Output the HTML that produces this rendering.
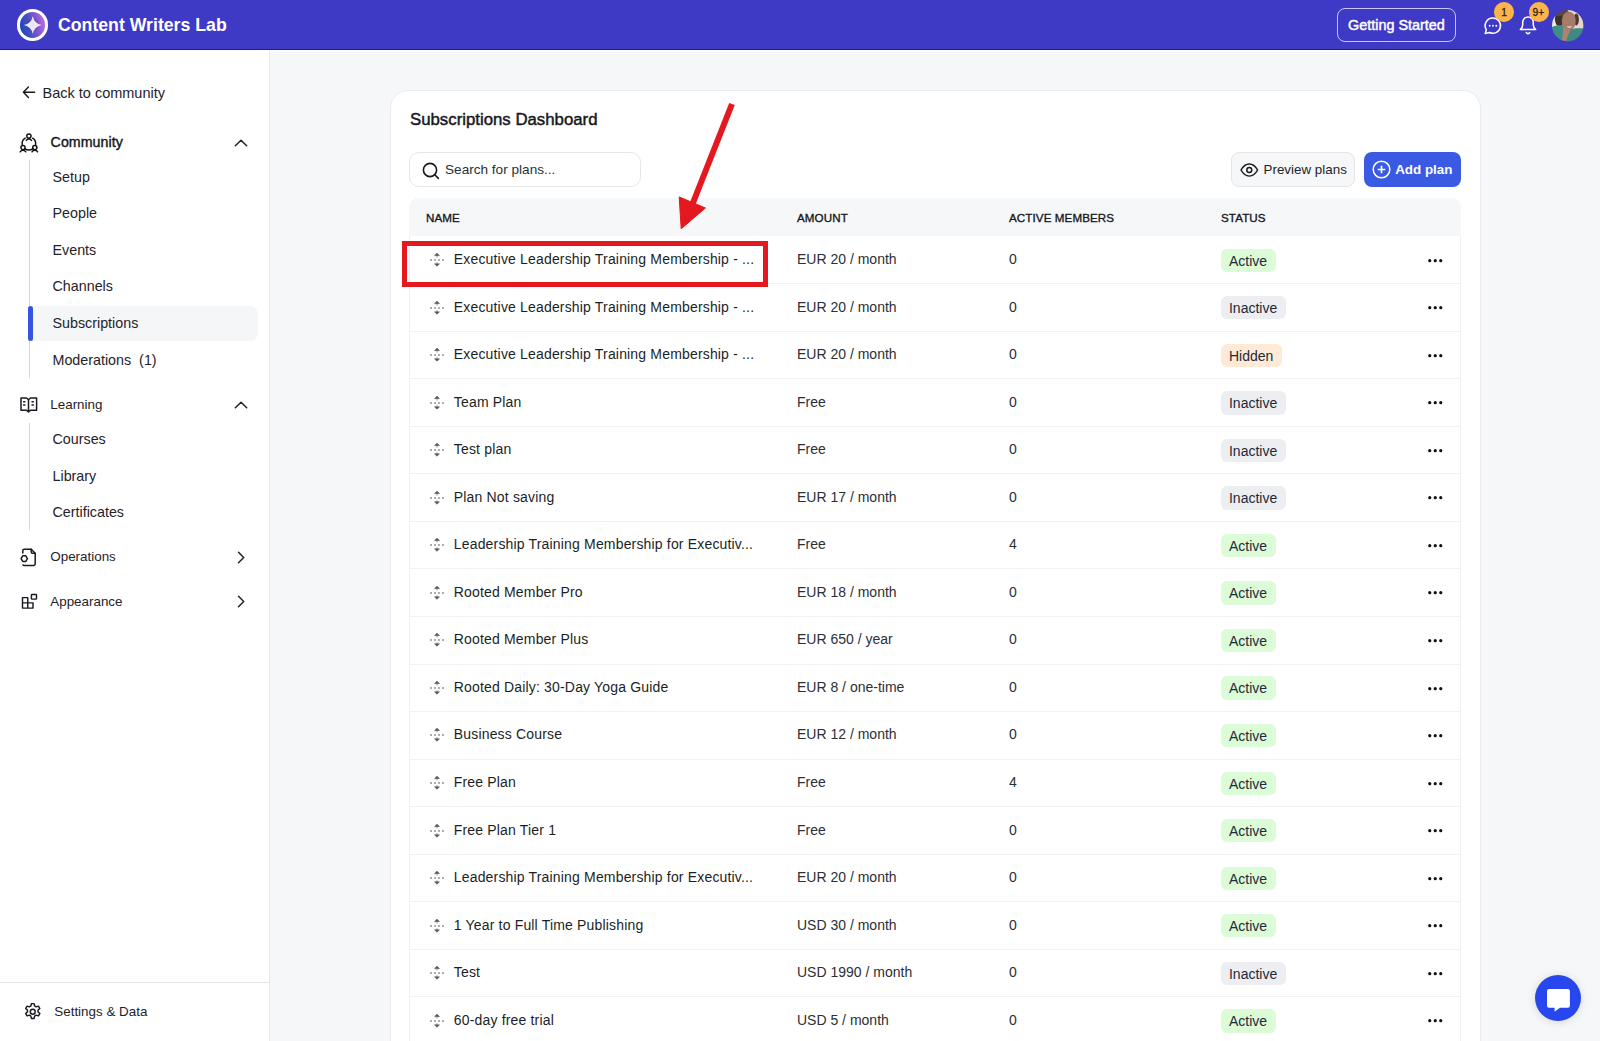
<!DOCTYPE html>
<html><head><meta charset="utf-8">
<style>
*{box-sizing:border-box;margin:0;padding:0}
html,body{width:1600px;height:1041px;overflow:hidden;background:#f6f7f9;font-family:"Liberation Sans",sans-serif;color:#1f2329}
.abs{position:absolute}
.t{position:absolute;white-space:nowrap;line-height:1}
svg{position:absolute;overflow:visible}
#hdr{position:absolute;left:0;top:0;width:1600px;height:50px;background:#3f3ac6;border-bottom:1px solid #1a0fd0}
#side{position:absolute;left:0;top:50px;width:270px;height:991px;background:#fff;border-right:1px solid #e7e8eb}
#card{position:absolute;left:390px;top:90.3px;width:1091px;height:1000px;background:#fff;border:1px solid #eaebee;border-radius:18px}
.bd{position:absolute;left:1220.6px;height:23.3px;padding:0 8.4px;border-radius:6px;font-size:14px;line-height:24px;color:#1f2937;white-space:nowrap}
.bd.active{background:#dcfbd7}
.bd.inactive{background:#eceef1}
.bd.hidden{background:#feead7}

</style></head><body>
<div id="hdr">
  <div class="abs" style="left:17.1px;top:9.3px;width:31.4px;height:31.4px;border-radius:50%;background:#fff;padding:3px">
    <div style="width:25.4px;height:25.4px;border-radius:50%;background:linear-gradient(78deg,#0c47b4 0%,#3f4fc0 32%,#8459d2 66%,#cb6dea 100%);position:relative;overflow:hidden">
      <svg width="25.4" height="25.4" viewBox="-12.7 -12.7 25.4 25.4" style="left:0;top:0"><defs><filter id="stb" x="-50%" y="-50%" width="200%" height="200%"><feGaussianBlur stdDeviation="1.3"/></filter></defs>
      <circle cx="0" cy="0" r="5.5" fill="#3a1c7a" opacity="0.45" filter="url(#stb)"/>
      <path d="M0 -8.9Q1.6 -1.6 8.9 0Q1.6 1.6 0 8.9Q-1.6 1.6 -8.9 0Q-1.6 -1.6 0 -8.9Z" fill="#ebe6fa" transform="translate(0.1,0.4)"/></svg>
    </div>
  </div>
  <div class="t" style="left:58px;top:17px;font-size:17.7px;font-weight:700;color:#fff">Content Writers Lab</div>
  <div class="abs" style="left:1337.2px;top:7.6px;width:119.2px;height:34.8px;border:1.3px solid rgba(255,255,255,0.7);border-radius:8px"></div>
  <div class="t" style="left:1348px;top:17.9px;font-size:14.4px;font-weight:400;color:#fff;-webkit-text-stroke:0.45px #fff">Getting Started</div>
  <!-- chat icon -->
  <svg width="18" height="18" viewBox="0 0 18 18" style="left:1483.5px;top:16.5px"><path d="M9 1.1a7.6 7.6 0 1 1-3.5 14.4L1.2 16.6l1.1-3.9A7.6 7.6 0 0 1 9 1.1Z" fill="none" stroke="#fff" stroke-width="1.5" stroke-linejoin="round"/><circle cx="5.7" cy="8.8" r="0.95" fill="#fff"/><circle cx="9" cy="8.8" r="0.95" fill="#fff"/><circle cx="12.3" cy="8.8" r="0.95" fill="#fff"/></svg>
  <div class="abs" style="left:1494.3px;top:2.3px;width:19.7px;height:19.7px;border-radius:50%;background:#fdb44b"></div>
  <div class="t" style="left:1501.3px;top:8px;font-size:10.2px;font-weight:400;color:#2a2420;-webkit-text-stroke:0.3px #2a2420">1</div>
  <!-- bell -->
  <svg width="18" height="20" viewBox="0 0 18 20" style="left:1518.5px;top:15px"><path d="M3.7 7.2A5.3 5.3 0 0 1 14.3 7.2V10c0 2 1.1 3.4 2.4 4.6H1.3C2.6 13.4 3.7 12 3.7 10Z" fill="none" stroke="#fff" stroke-width="1.5" stroke-linejoin="round"/><path d="M7.2 17.6 9 18.8 10.8 17.6" fill="none" stroke="#fff" stroke-width="1.4" stroke-linecap="round" stroke-linejoin="round"/></svg>
  <div class="abs" style="left:1529px;top:2.3px;width:19.7px;height:19.7px;border-radius:50%;background:#fdb44b"></div>
  <div class="t" style="left:1532.6px;top:8px;font-size:10.2px;font-weight:400;color:#2a2420;-webkit-text-stroke:0.3px #2a2420">9+</div>
  <!-- avatar -->
  <svg width="31.4" height="31.4" viewBox="0 0 31.4 31.4" style="left:1551.8px;top:9.6px"><defs><clipPath id="avc"><circle cx="15.7" cy="15.7" r="15.7"/></clipPath><filter id="avb" x="-10%" y="-10%" width="120%" height="120%"><feGaussianBlur stdDeviation="0.7"/></filter></defs>
  <g clip-path="url(#avc)"><g filter="url(#avb)">
   <rect x="-2" y="-2" width="36" height="36" fill="#e6d6ca"/>
   <rect x="0" y="0" width="6" height="32" fill="#eee8e2"/>
   <ellipse cx="7.5" cy="9" rx="4.6" ry="7.5" fill="#3d3029"/>
   <ellipse cx="24.3" cy="9.5" rx="2.6" ry="6" fill="#4a3a32"/>
   <ellipse cx="7.5" cy="2" rx="9" ry="4" fill="#5a463c"/><ellipse cx="16.8" cy="11" rx="7" ry="9.6" fill="#a77a6c"/>
   <path d="M9.5 17 L19 19 L15 32 H8Z" fill="#b08070"/>
   <path d="M0 17 C3 15.5 7 15 11.5 15.5 L10 32 H0Z" fill="#3f8e86"/>
   <path d="M18.5 19.5 C22 18.5 26 18 31.4 18.5 V32 H13.5Z" fill="#3c8a84"/>
   <path d="M15.5 16.5 C16.5 17.2 18.5 17.2 19.5 16.5" stroke="#f4eeee" stroke-width="1.2" fill="none"/>
  </g></g></svg>
</div>

<div id="side"></div>
<svg width="14" height="13" viewBox="0 0 14 13" style="left:22px;top:86px"><path d="M12.6 6.3H1.4M6.4 1 1.4 6.3l5 5.3" fill="none" stroke="#15171b" stroke-width="1.4" stroke-linecap="round" stroke-linejoin="round"/></svg>
<div class="t" style="left:42.5px;top:86.12px;font-size:14.5px;font-weight:400;color:#1f2329;">Back to community</div>
<svg width="20" height="20" viewBox="0 0 20 20" style="left:19px;top:132.5px"><g fill="none" stroke="#111" stroke-width="1.45" stroke-linecap="round">
<circle cx="9.9" cy="3.1" r="2.1"/><path d="M7.3 7.4c.6-1 1.5-1.4 2.6-1.4s2 .4 2.6 1.4"/>
<circle cx="4" cy="14.5" r="2.1"/><path d="M1.2 18.8c.6-1 1.6-1.5 2.8-1.5s2.2.5 2.8 1.5"/>
<circle cx="15.8" cy="14.5" r="2.1"/><path d="M13 18.8c.6-1 1.6-1.5 2.8-1.5s2.2.5 2.8 1.5"/>
<path d="M6.3 5.2A6.3 6.3 0 0 0 3.2 11.6M13.6 5.2A6.3 6.3 0 0 1 16.6 11.6M6.2 15.8c1.1 .8 2.3 1.1 3.7 1.1s2.6-.3 3.7-1.1"/></g></svg>
<div class="t" style="left:50.6px;top:134.98px;font-size:14.2px;font-weight:400;color:#15181d;-webkit-text-stroke:0.4px #15181d;letter-spacing:0.05px">Community</div>
<svg width="14" height="8" viewBox="0 0 14 8" style="left:233.5px;top:138.5px"><path d="M1.3 6.8 7 1.2l5.7 5.6" fill="none" stroke="#1f2329" stroke-width="1.5" stroke-linecap="round" stroke-linejoin="round"/></svg>
<div class="abs" style="left:29px;top:160px;width:1.3px;height:218px;background:#d4d6db"></div>
<div class="abs" style="left:28.5px;top:306px;width:229px;height:35px;background:#f5f6f8;border-radius:0 8px 8px 0"></div>
<div class="abs" style="left:28.2px;top:306.3px;width:4.5px;height:34.5px;background:#3355e0;border-radius:3px"></div>
<div class="t" style="left:52.5px;top:169.69px;font-size:14.3px;font-weight:400;color:#1f2329;">Setup</div>
<div class="t" style="left:52.5px;top:206.29px;font-size:14.3px;font-weight:400;color:#1f2329;">People</div>
<div class="t" style="left:52.5px;top:242.89px;font-size:14.3px;font-weight:400;color:#1f2329;">Events</div>
<div class="t" style="left:52.5px;top:279.49px;font-size:14.3px;font-weight:400;color:#1f2329;">Channels</div>
<div class="t" style="left:52.5px;top:316.09px;font-size:14.3px;font-weight:400;color:#1f2329;">Subscriptions</div>
<div class="t" style="left:52.5px;top:352.69px;font-size:14.3px;font-weight:400;color:#1f2329;">Moderations&nbsp;&nbsp;(1)</div>
<svg width="18" height="16" viewBox="0 0 18 16" style="left:20px;top:397px"><g fill="none" stroke="#1a1a22" stroke-width="1.5" stroke-linejoin="round" stroke-linecap="round">
<path d="M1 1h5.5L8.5 2.7 10.5 1H16.6v12.2h-6L8.5 14.8 6.4 13.2H1Z"/><path d="M8.5 2.7v12"/>
<path d="M3.6 4.7h1.3M3.6 7.9h1.3M12 4.7h1.3M12 7.9h1.3"/></g></svg>
<div class="t" style="left:50.3px;top:398.16px;font-size:13.4px;font-weight:400;color:#1f2329;">Learning</div>
<svg width="14" height="8" viewBox="0 0 14 8" style="left:233.5px;top:400.8px"><path d="M1.3 6.8 7 1.2l5.7 5.6" fill="none" stroke="#1f2329" stroke-width="1.5" stroke-linecap="round" stroke-linejoin="round"/></svg>
<div class="abs" style="left:29px;top:422.5px;width:1.3px;height:107.5px;background:#d4d6db"></div>
<div class="t" style="left:52.5px;top:431.79px;font-size:14.3px;font-weight:400;color:#1f2329;">Courses</div>
<div class="t" style="left:52.5px;top:468.59px;font-size:14.3px;font-weight:400;color:#1f2329;">Library</div>
<div class="t" style="left:52.5px;top:505.09px;font-size:14.3px;font-weight:400;color:#1f2329;">Certificates</div>
<svg width="16" height="19" viewBox="0 0 16 19" style="left:19.5px;top:547.5px"><g fill="none" stroke="#1a1a22" stroke-width="1.5" stroke-linejoin="round" stroke-linecap="round">
<path d="M2.8 5V2.6A1.4 1.4 0 0 1 4.2 1.2H11.2L15.2 5.2V16.1A1.4 1.4 0 0 1 13.8 17.5H4.1A1.3 1.3 0 0 1 3 16.9"/><path d="M11.2 1.3v2.6a1.3 1.3 0 0 0 1.3 1.3h2.6"/>
<path d="M7.4 10.6 5.8 13.4H2.7L1.1 10.6 2.7 7.8H5.8Z"/></g></svg>
<div class="t" style="left:50.3px;top:550.26px;font-size:13.4px;font-weight:400;color:#1f2329;">Operations</div>
<svg width="8" height="14" viewBox="0 0 8 14" style="left:236.5px;top:551px"><path d="M1.5 1.3l5.2 5.2-5.2 5.2" fill="none" stroke="#1f2329" stroke-width="1.5" stroke-linecap="round" stroke-linejoin="round"/></svg>
<svg width="17" height="17" viewBox="0 0 17 17" style="left:20.5px;top:593px"><g fill="none" stroke="#1a1a22" stroke-width="1.45" stroke-linejoin="round">
<path d="M1.5 4.6H6.75V9.85H12V15.1H1.5Z"/><path d="M1.5 9.85H6.75V15.1"/><rect x="10.4" y="1.5" width="5.1" height="4.6" rx=".7"/></g></svg>
<div class="t" style="left:50.3px;top:594.56px;font-size:13.4px;font-weight:400;color:#1f2329;">Appearance</div>
<svg width="8" height="14" viewBox="0 0 8 14" style="left:236.5px;top:595px"><path d="M1.5 1.3l5.2 5.2-5.2 5.2" fill="none" stroke="#1f2329" stroke-width="1.5" stroke-linecap="round" stroke-linejoin="round"/></svg>
<div class="abs" style="left:0;top:982px;width:269px;height:1px;background:#e5e7eb"></div>
<svg width="19.5" height="19.5" viewBox="0 0 24 24" style="left:22.8px;top:1002px"><g fill="none" stroke="#1a1a22" stroke-width="1.8" stroke-linejoin="round">
<path d="M10.3 2h3.4l.6 2.9 1.9 1.1 2.8-.9 1.7 2.9-2.2 2v2.2l2.2 2-1.7 2.9-2.8-.9-1.9 1.1-.6 2.9h-3.4l-.6-2.9-1.9-1.1-2.8.9-1.7-2.9 2.2-2v-2.2l-2.2-2 1.7-2.9 2.8.9 1.9-1.1Z"/><circle cx="12" cy="12" r="3"/></g></svg>
<div class="t" style="left:54.3px;top:1004.66px;font-size:13.4px;font-weight:400;color:#1f2329;">Settings &amp; Data</div>
<div class="abs" style="left:270px;top:50px;width:1330px;height:1px;background:#fff"></div>
<div id="card"></div>
<div class="t" style="left:410px;top:111.88px;font-size:16.8px;font-weight:400;color:#15181d;-webkit-text-stroke:0.45px #15181d">Subscriptions Dashboard</div>
<div class="abs" style="left:409.4px;top:152.2px;width:231.6px;height:34.4px;border:1px solid #e5e7eb;border-radius:10px;background:#fff"></div>
<svg width="18" height="18" viewBox="0 0 18 18" style="left:421.5px;top:162px"><circle cx="8" cy="8" r="6.6" fill="none" stroke="#15181d" stroke-width="1.6"/><path d="M12.8 12.8 16.4 16.4" stroke="#15181d" stroke-width="1.6" stroke-linecap="round"/></svg>
<div class="t" style="left:445px;top:162.79px;font-size:13.6px;font-weight:400;color:#2b2f36;">Search for plans...</div>
<div class="abs" style="left:1231.4px;top:152.1px;width:124.1px;height:34.6px;border:1px solid #e3e5e8;border-radius:8px;background:#f6f7f9"></div>
<svg width="19" height="14" viewBox="0 0 19 14" style="left:1240.3px;top:162.8px"><path d="M1 7C3.2 3 6 .9 9.3.9s6.1 2.1 8.3 6.1C15.4 11 12.6 13.1 9.3 13.1S3.2 11 1 7Z" fill="none" stroke="#15181d" stroke-width="1.45" stroke-linejoin="round"/><circle cx="9.3" cy="7" r="2.45" fill="none" stroke="#15181d" stroke-width="1.45"/></svg>
<div class="t" style="left:1263.5px;top:162.96px;font-size:13.4px;font-weight:400;color:#1f2329;">Preview plans</div>
<div class="abs" style="left:1363.5px;top:152.3px;width:97.3px;height:34.5px;border-radius:8px;background:#3a5ae3"></div>
<svg width="19" height="19" viewBox="0 0 19 19" style="left:1371.8px;top:160.3px"><circle cx="9.5" cy="9.5" r="8.3" fill="none" stroke="#fff" stroke-width="1.5"/><path d="M9.5 5.7v7.6M5.7 9.5h7.6" stroke="#fff" stroke-width="1.7" stroke-linecap="butt"/></svg>
<div class="t" style="left:1395.2px;top:162.66px;font-size:13.4px;font-weight:700;color:#fff;">Add plan</div>
<div class="abs" style="left:409px;top:198px;width:1052px;height:900px;border:1px solid #eef0f2;border-radius:10px;background:#fff"></div>
<div class="abs" style="left:409px;top:198px;width:1052px;height:38.4px;border-radius:10px 10px 0 0;background:#f6f7f9"></div>
<div class="t" style="left:426px;top:211.58px;font-size:11.6px;font-weight:400;color:#15181d;-webkit-text-stroke:0.35px #15181d;letter-spacing:0.1px">NAME</div>
<div class="t" style="left:797px;top:211.58px;font-size:11.6px;font-weight:400;color:#15181d;-webkit-text-stroke:0.35px #15181d;letter-spacing:0.1px">AMOUNT</div>
<div class="t" style="left:1009px;top:211.58px;font-size:11.6px;font-weight:400;color:#15181d;-webkit-text-stroke:0.35px #15181d;letter-spacing:0.1px">ACTIVE MEMBERS</div>
<div class="t" style="left:1221px;top:211.58px;font-size:11.6px;font-weight:400;color:#15181d;-webkit-text-stroke:0.35px #15181d;letter-spacing:0.1px">STATUS</div>
<svg width="16" height="16" viewBox="-8 -8 16 16" style="left:429.15px;top:252.06px"><g stroke-linecap="round"><path d="M-6.3 0h.7M-2.3 0h.7M1.6 0h.7M5.6 0h.7" stroke="#767b86" stroke-width="1.3"/><path d="M0 -2.9v-1.8M0 2.4v1.6" stroke="#a4a9b1" stroke-width="1.2"/><path d="M-2.1 -4.7 0 -6.8 2.1 -4.7Z M-2.1 4.1 0 6.2 2.1 4.1Z" fill="#555a66" stroke="#555a66" stroke-width="0.8" stroke-linejoin="round"/></g></svg>
<div class="t" style="left:453.8px;top:252.05px;font-size:14px;font-weight:400;color:#1b1f24;letter-spacing:0.17px">Executive Leadership Training Membership - ...</div>
<div class="t" style="left:797px;top:252.05px;font-size:14px;font-weight:400;color:#2b2f36;">EUR 20 / month</div>
<div class="t" style="left:1009px;top:252.05px;font-size:14px;font-weight:400;color:#2b2f36;">0</div>
<div class="bd active" style="top:248.60px">Active</div>
<svg width="16" height="4" viewBox="0 0 16 4" style="left:1427.6px;top:258.70px"><circle cx="1.75" cy="1.7" r="1.6" fill="#111"/><circle cx="7.25" cy="1.7" r="1.6" fill="#111"/><circle cx="12.75" cy="1.7" r="1.6" fill="#111"/></svg>
<div class="abs" style="left:410px;top:283.24px;width:1050px;height:1px;background:#f1f2f4"></div>
<svg width="16" height="16" viewBox="-8 -8 16 16" style="left:429.15px;top:299.60px"><g stroke-linecap="round"><path d="M-6.3 0h.7M-2.3 0h.7M1.6 0h.7M5.6 0h.7" stroke="#767b86" stroke-width="1.3"/><path d="M0 -2.9v-1.8M0 2.4v1.6" stroke="#a4a9b1" stroke-width="1.2"/><path d="M-2.1 -4.7 0 -6.8 2.1 -4.7Z M-2.1 4.1 0 6.2 2.1 4.1Z" fill="#555a66" stroke="#555a66" stroke-width="0.8" stroke-linejoin="round"/></g></svg>
<div class="t" style="left:453.8px;top:299.59px;font-size:14px;font-weight:400;color:#1b1f24;letter-spacing:0.17px">Executive Leadership Training Membership - ...</div>
<div class="t" style="left:797px;top:299.59px;font-size:14px;font-weight:400;color:#2b2f36;">EUR 20 / month</div>
<div class="t" style="left:1009px;top:299.59px;font-size:14px;font-weight:400;color:#2b2f36;">0</div>
<div class="bd inactive" style="top:296.14px">Inactive</div>
<svg width="16" height="4" viewBox="0 0 16 4" style="left:1427.6px;top:306.24px"><circle cx="1.75" cy="1.7" r="1.6" fill="#111"/><circle cx="7.25" cy="1.7" r="1.6" fill="#111"/><circle cx="12.75" cy="1.7" r="1.6" fill="#111"/></svg>
<div class="abs" style="left:410px;top:330.78px;width:1050px;height:1px;background:#f1f2f4"></div>
<svg width="16" height="16" viewBox="-8 -8 16 16" style="left:429.15px;top:347.14px"><g stroke-linecap="round"><path d="M-6.3 0h.7M-2.3 0h.7M1.6 0h.7M5.6 0h.7" stroke="#767b86" stroke-width="1.3"/><path d="M0 -2.9v-1.8M0 2.4v1.6" stroke="#a4a9b1" stroke-width="1.2"/><path d="M-2.1 -4.7 0 -6.8 2.1 -4.7Z M-2.1 4.1 0 6.2 2.1 4.1Z" fill="#555a66" stroke="#555a66" stroke-width="0.8" stroke-linejoin="round"/></g></svg>
<div class="t" style="left:453.8px;top:347.13px;font-size:14px;font-weight:400;color:#1b1f24;letter-spacing:0.17px">Executive Leadership Training Membership - ...</div>
<div class="t" style="left:797px;top:347.13px;font-size:14px;font-weight:400;color:#2b2f36;">EUR 20 / month</div>
<div class="t" style="left:1009px;top:347.13px;font-size:14px;font-weight:400;color:#2b2f36;">0</div>
<div class="bd hidden" style="top:343.68px">Hidden</div>
<svg width="16" height="4" viewBox="0 0 16 4" style="left:1427.6px;top:353.78px"><circle cx="1.75" cy="1.7" r="1.6" fill="#111"/><circle cx="7.25" cy="1.7" r="1.6" fill="#111"/><circle cx="12.75" cy="1.7" r="1.6" fill="#111"/></svg>
<div class="abs" style="left:410px;top:378.32px;width:1050px;height:1px;background:#f1f2f4"></div>
<svg width="16" height="16" viewBox="-8 -8 16 16" style="left:429.15px;top:394.68px"><g stroke-linecap="round"><path d="M-6.3 0h.7M-2.3 0h.7M1.6 0h.7M5.6 0h.7" stroke="#767b86" stroke-width="1.3"/><path d="M0 -2.9v-1.8M0 2.4v1.6" stroke="#a4a9b1" stroke-width="1.2"/><path d="M-2.1 -4.7 0 -6.8 2.1 -4.7Z M-2.1 4.1 0 6.2 2.1 4.1Z" fill="#555a66" stroke="#555a66" stroke-width="0.8" stroke-linejoin="round"/></g></svg>
<div class="t" style="left:453.8px;top:394.67px;font-size:14px;font-weight:400;color:#1b1f24;letter-spacing:0.17px">Team Plan</div>
<div class="t" style="left:797px;top:394.67px;font-size:14px;font-weight:400;color:#2b2f36;">Free</div>
<div class="t" style="left:1009px;top:394.67px;font-size:14px;font-weight:400;color:#2b2f36;">0</div>
<div class="bd inactive" style="top:391.22px">Inactive</div>
<svg width="16" height="4" viewBox="0 0 16 4" style="left:1427.6px;top:401.32px"><circle cx="1.75" cy="1.7" r="1.6" fill="#111"/><circle cx="7.25" cy="1.7" r="1.6" fill="#111"/><circle cx="12.75" cy="1.7" r="1.6" fill="#111"/></svg>
<div class="abs" style="left:410px;top:425.86px;width:1050px;height:1px;background:#f1f2f4"></div>
<svg width="16" height="16" viewBox="-8 -8 16 16" style="left:429.15px;top:442.22px"><g stroke-linecap="round"><path d="M-6.3 0h.7M-2.3 0h.7M1.6 0h.7M5.6 0h.7" stroke="#767b86" stroke-width="1.3"/><path d="M0 -2.9v-1.8M0 2.4v1.6" stroke="#a4a9b1" stroke-width="1.2"/><path d="M-2.1 -4.7 0 -6.8 2.1 -4.7Z M-2.1 4.1 0 6.2 2.1 4.1Z" fill="#555a66" stroke="#555a66" stroke-width="0.8" stroke-linejoin="round"/></g></svg>
<div class="t" style="left:453.8px;top:442.21px;font-size:14px;font-weight:400;color:#1b1f24;letter-spacing:0.17px">Test plan</div>
<div class="t" style="left:797px;top:442.21px;font-size:14px;font-weight:400;color:#2b2f36;">Free</div>
<div class="t" style="left:1009px;top:442.21px;font-size:14px;font-weight:400;color:#2b2f36;">0</div>
<div class="bd inactive" style="top:438.76px">Inactive</div>
<svg width="16" height="4" viewBox="0 0 16 4" style="left:1427.6px;top:448.86px"><circle cx="1.75" cy="1.7" r="1.6" fill="#111"/><circle cx="7.25" cy="1.7" r="1.6" fill="#111"/><circle cx="12.75" cy="1.7" r="1.6" fill="#111"/></svg>
<div class="abs" style="left:410px;top:473.40px;width:1050px;height:1px;background:#f1f2f4"></div>
<svg width="16" height="16" viewBox="-8 -8 16 16" style="left:429.15px;top:489.76px"><g stroke-linecap="round"><path d="M-6.3 0h.7M-2.3 0h.7M1.6 0h.7M5.6 0h.7" stroke="#767b86" stroke-width="1.3"/><path d="M0 -2.9v-1.8M0 2.4v1.6" stroke="#a4a9b1" stroke-width="1.2"/><path d="M-2.1 -4.7 0 -6.8 2.1 -4.7Z M-2.1 4.1 0 6.2 2.1 4.1Z" fill="#555a66" stroke="#555a66" stroke-width="0.8" stroke-linejoin="round"/></g></svg>
<div class="t" style="left:453.8px;top:489.75px;font-size:14px;font-weight:400;color:#1b1f24;letter-spacing:0.17px">Plan Not saving</div>
<div class="t" style="left:797px;top:489.75px;font-size:14px;font-weight:400;color:#2b2f36;">EUR 17 / month</div>
<div class="t" style="left:1009px;top:489.75px;font-size:14px;font-weight:400;color:#2b2f36;">0</div>
<div class="bd inactive" style="top:486.30px">Inactive</div>
<svg width="16" height="4" viewBox="0 0 16 4" style="left:1427.6px;top:496.40px"><circle cx="1.75" cy="1.7" r="1.6" fill="#111"/><circle cx="7.25" cy="1.7" r="1.6" fill="#111"/><circle cx="12.75" cy="1.7" r="1.6" fill="#111"/></svg>
<div class="abs" style="left:410px;top:520.94px;width:1050px;height:1px;background:#f1f2f4"></div>
<svg width="16" height="16" viewBox="-8 -8 16 16" style="left:429.15px;top:537.30px"><g stroke-linecap="round"><path d="M-6.3 0h.7M-2.3 0h.7M1.6 0h.7M5.6 0h.7" stroke="#767b86" stroke-width="1.3"/><path d="M0 -2.9v-1.8M0 2.4v1.6" stroke="#a4a9b1" stroke-width="1.2"/><path d="M-2.1 -4.7 0 -6.8 2.1 -4.7Z M-2.1 4.1 0 6.2 2.1 4.1Z" fill="#555a66" stroke="#555a66" stroke-width="0.8" stroke-linejoin="round"/></g></svg>
<div class="t" style="left:453.8px;top:537.29px;font-size:14px;font-weight:400;color:#1b1f24;letter-spacing:0.17px">Leadership Training Membership for Executiv...</div>
<div class="t" style="left:797px;top:537.29px;font-size:14px;font-weight:400;color:#2b2f36;">Free</div>
<div class="t" style="left:1009px;top:537.29px;font-size:14px;font-weight:400;color:#2b2f36;">4</div>
<div class="bd active" style="top:533.84px">Active</div>
<svg width="16" height="4" viewBox="0 0 16 4" style="left:1427.6px;top:543.94px"><circle cx="1.75" cy="1.7" r="1.6" fill="#111"/><circle cx="7.25" cy="1.7" r="1.6" fill="#111"/><circle cx="12.75" cy="1.7" r="1.6" fill="#111"/></svg>
<div class="abs" style="left:410px;top:568.48px;width:1050px;height:1px;background:#f1f2f4"></div>
<svg width="16" height="16" viewBox="-8 -8 16 16" style="left:429.15px;top:584.84px"><g stroke-linecap="round"><path d="M-6.3 0h.7M-2.3 0h.7M1.6 0h.7M5.6 0h.7" stroke="#767b86" stroke-width="1.3"/><path d="M0 -2.9v-1.8M0 2.4v1.6" stroke="#a4a9b1" stroke-width="1.2"/><path d="M-2.1 -4.7 0 -6.8 2.1 -4.7Z M-2.1 4.1 0 6.2 2.1 4.1Z" fill="#555a66" stroke="#555a66" stroke-width="0.8" stroke-linejoin="round"/></g></svg>
<div class="t" style="left:453.8px;top:584.83px;font-size:14px;font-weight:400;color:#1b1f24;letter-spacing:0.17px">Rooted Member Pro</div>
<div class="t" style="left:797px;top:584.83px;font-size:14px;font-weight:400;color:#2b2f36;">EUR 18 / month</div>
<div class="t" style="left:1009px;top:584.83px;font-size:14px;font-weight:400;color:#2b2f36;">0</div>
<div class="bd active" style="top:581.38px">Active</div>
<svg width="16" height="4" viewBox="0 0 16 4" style="left:1427.6px;top:591.48px"><circle cx="1.75" cy="1.7" r="1.6" fill="#111"/><circle cx="7.25" cy="1.7" r="1.6" fill="#111"/><circle cx="12.75" cy="1.7" r="1.6" fill="#111"/></svg>
<div class="abs" style="left:410px;top:616.02px;width:1050px;height:1px;background:#f1f2f4"></div>
<svg width="16" height="16" viewBox="-8 -8 16 16" style="left:429.15px;top:632.38px"><g stroke-linecap="round"><path d="M-6.3 0h.7M-2.3 0h.7M1.6 0h.7M5.6 0h.7" stroke="#767b86" stroke-width="1.3"/><path d="M0 -2.9v-1.8M0 2.4v1.6" stroke="#a4a9b1" stroke-width="1.2"/><path d="M-2.1 -4.7 0 -6.8 2.1 -4.7Z M-2.1 4.1 0 6.2 2.1 4.1Z" fill="#555a66" stroke="#555a66" stroke-width="0.8" stroke-linejoin="round"/></g></svg>
<div class="t" style="left:453.8px;top:632.37px;font-size:14px;font-weight:400;color:#1b1f24;letter-spacing:0.17px">Rooted Member Plus</div>
<div class="t" style="left:797px;top:632.37px;font-size:14px;font-weight:400;color:#2b2f36;">EUR 650 / year</div>
<div class="t" style="left:1009px;top:632.37px;font-size:14px;font-weight:400;color:#2b2f36;">0</div>
<div class="bd active" style="top:628.92px">Active</div>
<svg width="16" height="4" viewBox="0 0 16 4" style="left:1427.6px;top:639.02px"><circle cx="1.75" cy="1.7" r="1.6" fill="#111"/><circle cx="7.25" cy="1.7" r="1.6" fill="#111"/><circle cx="12.75" cy="1.7" r="1.6" fill="#111"/></svg>
<div class="abs" style="left:410px;top:663.56px;width:1050px;height:1px;background:#f1f2f4"></div>
<svg width="16" height="16" viewBox="-8 -8 16 16" style="left:429.15px;top:679.92px"><g stroke-linecap="round"><path d="M-6.3 0h.7M-2.3 0h.7M1.6 0h.7M5.6 0h.7" stroke="#767b86" stroke-width="1.3"/><path d="M0 -2.9v-1.8M0 2.4v1.6" stroke="#a4a9b1" stroke-width="1.2"/><path d="M-2.1 -4.7 0 -6.8 2.1 -4.7Z M-2.1 4.1 0 6.2 2.1 4.1Z" fill="#555a66" stroke="#555a66" stroke-width="0.8" stroke-linejoin="round"/></g></svg>
<div class="t" style="left:453.8px;top:679.91px;font-size:14px;font-weight:400;color:#1b1f24;letter-spacing:0.17px">Rooted Daily: 30-Day Yoga Guide</div>
<div class="t" style="left:797px;top:679.91px;font-size:14px;font-weight:400;color:#2b2f36;">EUR 8 / one-time</div>
<div class="t" style="left:1009px;top:679.91px;font-size:14px;font-weight:400;color:#2b2f36;">0</div>
<div class="bd active" style="top:676.46px">Active</div>
<svg width="16" height="4" viewBox="0 0 16 4" style="left:1427.6px;top:686.56px"><circle cx="1.75" cy="1.7" r="1.6" fill="#111"/><circle cx="7.25" cy="1.7" r="1.6" fill="#111"/><circle cx="12.75" cy="1.7" r="1.6" fill="#111"/></svg>
<div class="abs" style="left:410px;top:711.10px;width:1050px;height:1px;background:#f1f2f4"></div>
<svg width="16" height="16" viewBox="-8 -8 16 16" style="left:429.15px;top:727.46px"><g stroke-linecap="round"><path d="M-6.3 0h.7M-2.3 0h.7M1.6 0h.7M5.6 0h.7" stroke="#767b86" stroke-width="1.3"/><path d="M0 -2.9v-1.8M0 2.4v1.6" stroke="#a4a9b1" stroke-width="1.2"/><path d="M-2.1 -4.7 0 -6.8 2.1 -4.7Z M-2.1 4.1 0 6.2 2.1 4.1Z" fill="#555a66" stroke="#555a66" stroke-width="0.8" stroke-linejoin="round"/></g></svg>
<div class="t" style="left:453.8px;top:727.45px;font-size:14px;font-weight:400;color:#1b1f24;letter-spacing:0.17px">Business Course</div>
<div class="t" style="left:797px;top:727.45px;font-size:14px;font-weight:400;color:#2b2f36;">EUR 12 / month</div>
<div class="t" style="left:1009px;top:727.45px;font-size:14px;font-weight:400;color:#2b2f36;">0</div>
<div class="bd active" style="top:724.00px">Active</div>
<svg width="16" height="4" viewBox="0 0 16 4" style="left:1427.6px;top:734.10px"><circle cx="1.75" cy="1.7" r="1.6" fill="#111"/><circle cx="7.25" cy="1.7" r="1.6" fill="#111"/><circle cx="12.75" cy="1.7" r="1.6" fill="#111"/></svg>
<div class="abs" style="left:410px;top:758.64px;width:1050px;height:1px;background:#f1f2f4"></div>
<svg width="16" height="16" viewBox="-8 -8 16 16" style="left:429.15px;top:775.00px"><g stroke-linecap="round"><path d="M-6.3 0h.7M-2.3 0h.7M1.6 0h.7M5.6 0h.7" stroke="#767b86" stroke-width="1.3"/><path d="M0 -2.9v-1.8M0 2.4v1.6" stroke="#a4a9b1" stroke-width="1.2"/><path d="M-2.1 -4.7 0 -6.8 2.1 -4.7Z M-2.1 4.1 0 6.2 2.1 4.1Z" fill="#555a66" stroke="#555a66" stroke-width="0.8" stroke-linejoin="round"/></g></svg>
<div class="t" style="left:453.8px;top:774.99px;font-size:14px;font-weight:400;color:#1b1f24;letter-spacing:0.17px">Free Plan</div>
<div class="t" style="left:797px;top:774.99px;font-size:14px;font-weight:400;color:#2b2f36;">Free</div>
<div class="t" style="left:1009px;top:774.99px;font-size:14px;font-weight:400;color:#2b2f36;">4</div>
<div class="bd active" style="top:771.54px">Active</div>
<svg width="16" height="4" viewBox="0 0 16 4" style="left:1427.6px;top:781.64px"><circle cx="1.75" cy="1.7" r="1.6" fill="#111"/><circle cx="7.25" cy="1.7" r="1.6" fill="#111"/><circle cx="12.75" cy="1.7" r="1.6" fill="#111"/></svg>
<div class="abs" style="left:410px;top:806.18px;width:1050px;height:1px;background:#f1f2f4"></div>
<svg width="16" height="16" viewBox="-8 -8 16 16" style="left:429.15px;top:822.54px"><g stroke-linecap="round"><path d="M-6.3 0h.7M-2.3 0h.7M1.6 0h.7M5.6 0h.7" stroke="#767b86" stroke-width="1.3"/><path d="M0 -2.9v-1.8M0 2.4v1.6" stroke="#a4a9b1" stroke-width="1.2"/><path d="M-2.1 -4.7 0 -6.8 2.1 -4.7Z M-2.1 4.1 0 6.2 2.1 4.1Z" fill="#555a66" stroke="#555a66" stroke-width="0.8" stroke-linejoin="round"/></g></svg>
<div class="t" style="left:453.8px;top:822.53px;font-size:14px;font-weight:400;color:#1b1f24;letter-spacing:0.17px">Free Plan Tier 1</div>
<div class="t" style="left:797px;top:822.53px;font-size:14px;font-weight:400;color:#2b2f36;">Free</div>
<div class="t" style="left:1009px;top:822.53px;font-size:14px;font-weight:400;color:#2b2f36;">0</div>
<div class="bd active" style="top:819.08px">Active</div>
<svg width="16" height="4" viewBox="0 0 16 4" style="left:1427.6px;top:829.18px"><circle cx="1.75" cy="1.7" r="1.6" fill="#111"/><circle cx="7.25" cy="1.7" r="1.6" fill="#111"/><circle cx="12.75" cy="1.7" r="1.6" fill="#111"/></svg>
<div class="abs" style="left:410px;top:853.72px;width:1050px;height:1px;background:#f1f2f4"></div>
<svg width="16" height="16" viewBox="-8 -8 16 16" style="left:429.15px;top:870.08px"><g stroke-linecap="round"><path d="M-6.3 0h.7M-2.3 0h.7M1.6 0h.7M5.6 0h.7" stroke="#767b86" stroke-width="1.3"/><path d="M0 -2.9v-1.8M0 2.4v1.6" stroke="#a4a9b1" stroke-width="1.2"/><path d="M-2.1 -4.7 0 -6.8 2.1 -4.7Z M-2.1 4.1 0 6.2 2.1 4.1Z" fill="#555a66" stroke="#555a66" stroke-width="0.8" stroke-linejoin="round"/></g></svg>
<div class="t" style="left:453.8px;top:870.07px;font-size:14px;font-weight:400;color:#1b1f24;letter-spacing:0.17px">Leadership Training Membership for Executiv...</div>
<div class="t" style="left:797px;top:870.07px;font-size:14px;font-weight:400;color:#2b2f36;">EUR 20 / month</div>
<div class="t" style="left:1009px;top:870.07px;font-size:14px;font-weight:400;color:#2b2f36;">0</div>
<div class="bd active" style="top:866.62px">Active</div>
<svg width="16" height="4" viewBox="0 0 16 4" style="left:1427.6px;top:876.72px"><circle cx="1.75" cy="1.7" r="1.6" fill="#111"/><circle cx="7.25" cy="1.7" r="1.6" fill="#111"/><circle cx="12.75" cy="1.7" r="1.6" fill="#111"/></svg>
<div class="abs" style="left:410px;top:901.26px;width:1050px;height:1px;background:#f1f2f4"></div>
<svg width="16" height="16" viewBox="-8 -8 16 16" style="left:429.15px;top:917.62px"><g stroke-linecap="round"><path d="M-6.3 0h.7M-2.3 0h.7M1.6 0h.7M5.6 0h.7" stroke="#767b86" stroke-width="1.3"/><path d="M0 -2.9v-1.8M0 2.4v1.6" stroke="#a4a9b1" stroke-width="1.2"/><path d="M-2.1 -4.7 0 -6.8 2.1 -4.7Z M-2.1 4.1 0 6.2 2.1 4.1Z" fill="#555a66" stroke="#555a66" stroke-width="0.8" stroke-linejoin="round"/></g></svg>
<div class="t" style="left:453.8px;top:917.61px;font-size:14px;font-weight:400;color:#1b1f24;letter-spacing:0.17px">1 Year to Full Time Publishing</div>
<div class="t" style="left:797px;top:917.61px;font-size:14px;font-weight:400;color:#2b2f36;">USD 30 / month</div>
<div class="t" style="left:1009px;top:917.61px;font-size:14px;font-weight:400;color:#2b2f36;">0</div>
<div class="bd active" style="top:914.16px">Active</div>
<svg width="16" height="4" viewBox="0 0 16 4" style="left:1427.6px;top:924.26px"><circle cx="1.75" cy="1.7" r="1.6" fill="#111"/><circle cx="7.25" cy="1.7" r="1.6" fill="#111"/><circle cx="12.75" cy="1.7" r="1.6" fill="#111"/></svg>
<div class="abs" style="left:410px;top:948.80px;width:1050px;height:1px;background:#f1f2f4"></div>
<svg width="16" height="16" viewBox="-8 -8 16 16" style="left:429.15px;top:965.16px"><g stroke-linecap="round"><path d="M-6.3 0h.7M-2.3 0h.7M1.6 0h.7M5.6 0h.7" stroke="#767b86" stroke-width="1.3"/><path d="M0 -2.9v-1.8M0 2.4v1.6" stroke="#a4a9b1" stroke-width="1.2"/><path d="M-2.1 -4.7 0 -6.8 2.1 -4.7Z M-2.1 4.1 0 6.2 2.1 4.1Z" fill="#555a66" stroke="#555a66" stroke-width="0.8" stroke-linejoin="round"/></g></svg>
<div class="t" style="left:453.8px;top:965.15px;font-size:14px;font-weight:400;color:#1b1f24;letter-spacing:0.17px">Test</div>
<div class="t" style="left:797px;top:965.15px;font-size:14px;font-weight:400;color:#2b2f36;">USD 1990 / month</div>
<div class="t" style="left:1009px;top:965.15px;font-size:14px;font-weight:400;color:#2b2f36;">0</div>
<div class="bd inactive" style="top:961.70px">Inactive</div>
<svg width="16" height="4" viewBox="0 0 16 4" style="left:1427.6px;top:971.80px"><circle cx="1.75" cy="1.7" r="1.6" fill="#111"/><circle cx="7.25" cy="1.7" r="1.6" fill="#111"/><circle cx="12.75" cy="1.7" r="1.6" fill="#111"/></svg>
<div class="abs" style="left:410px;top:996.34px;width:1050px;height:1px;background:#f1f2f4"></div>
<svg width="16" height="16" viewBox="-8 -8 16 16" style="left:429.15px;top:1012.70px"><g stroke-linecap="round"><path d="M-6.3 0h.7M-2.3 0h.7M1.6 0h.7M5.6 0h.7" stroke="#767b86" stroke-width="1.3"/><path d="M0 -2.9v-1.8M0 2.4v1.6" stroke="#a4a9b1" stroke-width="1.2"/><path d="M-2.1 -4.7 0 -6.8 2.1 -4.7Z M-2.1 4.1 0 6.2 2.1 4.1Z" fill="#555a66" stroke="#555a66" stroke-width="0.8" stroke-linejoin="round"/></g></svg>
<div class="t" style="left:453.8px;top:1012.69px;font-size:14px;font-weight:400;color:#1b1f24;letter-spacing:0.17px">60-day free trial</div>
<div class="t" style="left:797px;top:1012.69px;font-size:14px;font-weight:400;color:#2b2f36;">USD 5 / month</div>
<div class="t" style="left:1009px;top:1012.69px;font-size:14px;font-weight:400;color:#2b2f36;">0</div>
<div class="bd active" style="top:1009.24px">Active</div>
<svg width="16" height="4" viewBox="0 0 16 4" style="left:1427.6px;top:1019.34px"><circle cx="1.75" cy="1.7" r="1.6" fill="#111"/><circle cx="7.25" cy="1.7" r="1.6" fill="#111"/><circle cx="12.75" cy="1.7" r="1.6" fill="#111"/></svg>
<div class="abs" style="left:402.3px;top:241.3px;width:366.2px;height:45.4px;border:5.2px solid #e3191f"></div>
<svg width="1600" height="300" viewBox="0 0 1600 300" style="left:0;top:0"><path d="M732 104 L692.5 204" stroke="#e3191f" stroke-width="6" stroke-linecap="butt"/><path d="M681.2 228.8 L679.2 196.9 L705.4 208Z" fill="#e3191f" stroke="#e3191f" stroke-width="1" stroke-linejoin="round"/></svg>
<div class="abs" style="left:1535.2px;top:975px;width:46px;height:46px;border-radius:50%;background:#2846ee;box-shadow:0 1px 10px rgba(0,0,0,0.13)"></div>
<svg width="24" height="24" viewBox="0 0 24 24" style="left:1546.9px;top:988.9px"><path d="M2 0H20.9A2 2 0 0 1 22.9 2V16.8A2 2 0 0 1 20.9 18.8H13L7.6 22.8V18.8H2A2 2 0 0 1 0 16.8V2A2 2 0 0 1 2 0Z" fill="#fff"/></svg>
</body></html>
